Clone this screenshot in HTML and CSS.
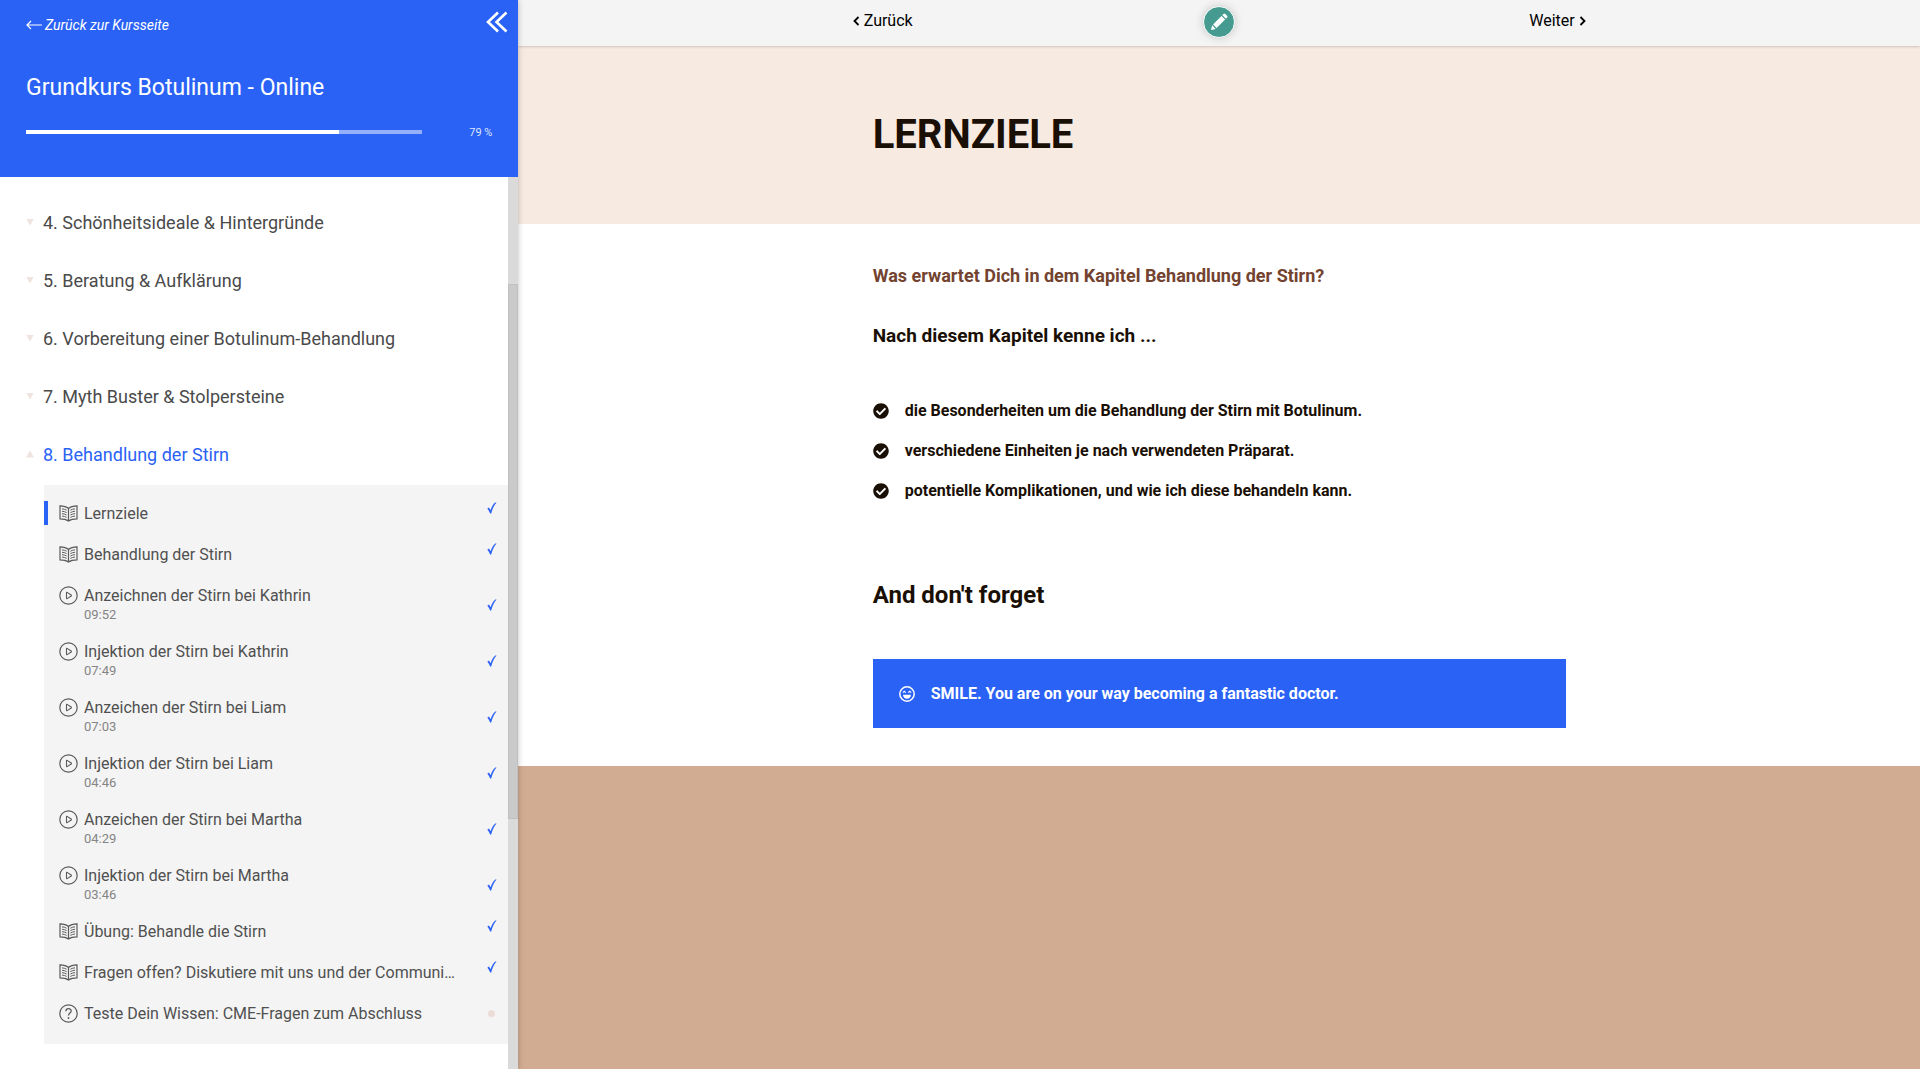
FILE: index.html
```html
<!DOCTYPE html>
<html lang="de">
<head>
    <meta charset="UTF-8">
    <meta name="viewport" content="width=device-width, initial-scale=1.0">
    <title>Grundkurs Botulinum - Online</title>
    <link rel="stylesheet" href="styles.css">
</head>
<body>
    <!-- Shared icons -->
    <svg class="sprite" aria-hidden="true">
        <symbol id="icon-book" viewBox="0 0 19 18">
            <path d="M9.5 4C7.500 2.300 4.500 1.500 1 1.400V14.300C4.500 14.300 7.500 15 9.500 16.500C11.500 15 14.500 14.300 18 14.300V1.400C14.500 1.500 11.500 2.300 9.500 4ZM9.500 4V16.500" fill="none" stroke="currentColor" stroke-width="1.200"/>
            <path d="M3 4.300C4.800 4.500 6.300 5 7.600 5.700M3 6.700C4.800 6.900 6.300 7.400 7.600 8.100M3 9.100C4.800 9.300 6.300 9.800 7.600 10.500M3 11.500C4.800 11.700 6.300 12.200 7.600 12.900M16 4.300C14.200 4.500 12.700 5 11.400 5.700M16 6.700C14.200 6.900 12.700 7.400 11.400 8.100M16 9.100C14.200 9.300 12.700 9.800 11.400 10.500M16 11.500C14.200 11.700 12.700 12.200 11.400 12.900" fill="none" stroke="currentColor" stroke-width="1"/>
        </symbol>
        <symbol id="icon-play" viewBox="0 0 19 19">
            <circle cx="9.500" cy="9.500" r="8.700" fill="none" stroke="currentColor" stroke-width="1.200"/>
            <path d="M7.500 6.700V12.300Q7.500 12.900 8.100 12.600L12.200 10Q12.700 9.500 12.200 9L8.100 6.400Q7.500 6.100 7.500 6.700Z" fill="none" stroke="currentColor" stroke-width="1.100"/>
        </symbol>
        <symbol id="icon-question" viewBox="0 0 19 19">
            <circle cx="9.500" cy="9.500" r="8.700" fill="none" stroke="currentColor" stroke-width="1.200"/>
            <path d="M6.900 7.200C6.900 3.700 12.200 3.800 12.200 7C12.200 9.200 9.500 9 9.500 11.600" fill="none" stroke="currentColor" stroke-width="1.300"/>
            <circle cx="9.500" cy="14" r="0.900" fill="currentColor"/>
        </symbol>
        <symbol id="icon-check" viewBox="0 0 10 12">
            <path d="M0.300 6.800L1.900 5.600C2.600 6.400 3.100 7.200 3.500 8.200C4.800 4.700 6.500 1.500 8.300 0.500H9.600C7.300 2.900 5.300 6.900 4.200 11.500H3.100C2.500 9.700 1.600 8 0.300 6.800Z" fill="currentColor"/>
        </symbol>
        <symbol id="icon-check-circle" viewBox="0 0 512 512">
            <path d="M504 256c0 137-111 248-248 248S8 393 8 256 119 8 256 8s248 111 248 248zM227.300 387.300l184-184c6.200-6.200 6.200-16.400 0-22.600l-22.600-22.600c-6.200-6.200-16.400-6.200-22.600 0L216 308.100l-70.100-70.100c-6.200-6.200-16.400-6.200-22.600 0l-22.600 22.600c-6.200 6.200-6.200 16.400 0 22.600l104 104c6.200 6.200 16.400 6.200 22.600 0z" fill="currentColor"/>
        </symbol>
    </svg>

    <aside class="sidebar">
        <header class="course-header">
            <div class="course-top">
                <a class="back-link" href="#">
                    <svg width="16" height="10" viewBox="0 0 16 10" aria-hidden="true"><path d="M5 1L1 5L5 9M1 5H16" fill="none" stroke="currentColor" stroke-width="1.200"/></svg>
                    Zurück zur Kursseite
                </a>
                <button class="collapse-btn" type="button" aria-label="Menü einklappen">
                    <svg width="22" height="22" viewBox="0 0 22 22"><path d="M12 1.500L2 11L12 20.500M20.500 1.500L10.500 11L20.500 20.500" fill="none" stroke="currentColor" stroke-width="2.600"/></svg>
                </button>
            </div>
            <h2 class="course-title">Grundkurs Botulinum - Online</h2>
            <div class="progress">
                <div class="progress-track"><div class="progress-fill" style="width: 79%"></div></div>
                <span class="progress-label">79 %</span>
            </div>
        </header>

        <div class="sidebar-body">
            <nav class="chapters">
                <button class="chapter" type="button">4. Schönheitsideale &amp; Hintergründe</button>
                <button class="chapter" type="button">5. Beratung &amp; Aufklärung</button>
                <button class="chapter" type="button">6. Vorbereitung einer Botulinum-Behandlung</button>
                <button class="chapter" type="button">7. Myth Buster &amp; Stolpersteine</button>
                <button class="chapter open" type="button">8. Behandlung der Stirn</button>
                <ul class="lessons">
                    <li class="lesson active">
                        <div class="lesson-info"><a href="#"><svg class="icon"><use href="#icon-book"/></svg>Lernziele</a></div>
                        <svg class="check"><use href="#icon-check"/></svg>
                    </li>
                    <li class="lesson">
                        <div class="lesson-info"><a href="#"><svg class="icon"><use href="#icon-book"/></svg>Behandlung der Stirn</a></div>
                        <svg class="check"><use href="#icon-check"/></svg>
                    </li>
                    <li class="lesson">
                        <div class="lesson-info"><a href="#"><svg class="icon"><use href="#icon-play"/></svg>Anzeichnen der Stirn bei Kathrin</a><span class="time">09:52</span></div>
                        <svg class="check"><use href="#icon-check"/></svg>
                    </li>
                    <li class="lesson">
                        <div class="lesson-info"><a href="#"><svg class="icon"><use href="#icon-play"/></svg>Injektion der Stirn bei Kathrin</a><span class="time">07:49</span></div>
                        <svg class="check"><use href="#icon-check"/></svg>
                    </li>
                    <li class="lesson">
                        <div class="lesson-info"><a href="#"><svg class="icon"><use href="#icon-play"/></svg>Anzeichen der Stirn bei Liam</a><span class="time">07:03</span></div>
                        <svg class="check"><use href="#icon-check"/></svg>
                    </li>
                    <li class="lesson">
                        <div class="lesson-info"><a href="#"><svg class="icon"><use href="#icon-play"/></svg>Injektion der Stirn bei Liam</a><span class="time">04:46</span></div>
                        <svg class="check"><use href="#icon-check"/></svg>
                    </li>
                    <li class="lesson">
                        <div class="lesson-info"><a href="#"><svg class="icon"><use href="#icon-play"/></svg>Anzeichen der Stirn bei Martha</a><span class="time">04:29</span></div>
                        <svg class="check"><use href="#icon-check"/></svg>
                    </li>
                    <li class="lesson">
                        <div class="lesson-info"><a href="#"><svg class="icon"><use href="#icon-play"/></svg>Injektion der Stirn bei Martha</a><span class="time">03:46</span></div>
                        <svg class="check"><use href="#icon-check"/></svg>
                    </li>
                    <li class="lesson">
                        <div class="lesson-info"><a href="#"><svg class="icon"><use href="#icon-book"/></svg>Übung: Behandle die Stirn</a></div>
                        <svg class="check"><use href="#icon-check"/></svg>
                    </li>
                    <li class="lesson">
                        <div class="lesson-info"><a href="#"><svg class="icon"><use href="#icon-book"/></svg>Fragen offen? Diskutiere mit uns und der Communi…</a></div>
                        <svg class="check"><use href="#icon-check"/></svg>
                    </li>
                    <li class="lesson">
                        <div class="lesson-info"><a href="#"><svg class="icon"><use href="#icon-question"/></svg>Teste Dein Wissen: CME-Fragen zum Abschluss</a></div>
                        <span class="dot"></span>
                    </li>
                </ul>
            </nav>
            <div class="scrollbar"><div class="scrollbar-thumb"></div></div>
        </div>
    </aside>

    <main class="content">
        <nav class="lesson-nav">
            <div class="lesson-nav-inner">
                <a href="#">
                    <svg width="7" height="10" viewBox="0 0 7 10" aria-hidden="true"><path d="M5.500 1L1.500 5L5.500 9" fill="none" stroke="currentColor" stroke-width="1.800"/></svg>
                    Zurück
                </a>
                <button class="edit-btn" type="button" aria-label="Notiz schreiben">
                    <svg width="20" height="20" viewBox="0 0 20 20"><path d="M2 18L3.100 13.300L6.700 16.900ZM4 12.400L12.500 3.900L16.100 7.500L7.600 16ZM13.300 3.100L14.500 1.900Q15.400 1 16.300 1.900L18.100 3.700Q19 4.600 18.100 5.500L16.900 6.700Z" fill="currentColor"/></svg>
                </button>
                <a class="next" href="#">
                    Weiter
                    <svg width="7" height="10" viewBox="0 0 7 10" aria-hidden="true"><path d="M1.500 1L5.500 5L1.500 9" fill="none" stroke="currentColor" stroke-width="1.800"/></svg>
                </a>
            </div>
        </nav>

        <section class="hero">
            <h1 class="wrap">LERNZIELE</h1>
        </section>

        <section class="lesson-body wrap">
            <h3 class="question">Was erwartet Dich in dem Kapitel Behandlung der Stirn?</h3>
            <h3 class="intro">Nach diesem Kapitel kenne ich ...</h3>
            <ul class="goals">
                <li><svg><use href="#icon-check-circle"/></svg>die Besonderheiten um die Behandlung der Stirn mit Botulinum.</li>
                <li><svg><use href="#icon-check-circle"/></svg>verschiedene Einheiten je nach verwendeten Präparat.</li>
                <li><svg><use href="#icon-check-circle"/></svg>potentielle Komplikationen, und wie ich diese behandeln kann.</li>
            </ul>
            <h2 class="reminder">And don't forget</h2>
            <div class="notice">
                <svg width="16" height="16" viewBox="0 0 16 16" aria-hidden="true">
                    <circle cx="8" cy="8" r="7.200" fill="none" stroke="currentColor" stroke-width="1.500"/>
                    <path d="M3.800 6.600L5.300 5.300L6.800 6.600M9.200 6.600L10.700 5.300L12.200 6.600" fill="none" stroke="currentColor" stroke-width="1.100"/>
                    <path d="M4 8.700H12C11.800 11.200 10.200 12.700 8 12.700S4.200 11.200 4 8.700Z" fill="currentColor"/>
                </svg>
                SMILE. You are on your way becoming a fantastic doctor.
            </div>
        </section>

        <footer class="page-footer"></footer>
    </main>
</body>
</html>
```

FILE: styles.css
```css
* {
    box-sizing: border-box;
}

body {
    margin: 0;
    display: flex;
    min-height: 100vh;
    font-family: Roboto, "Liberation Sans", sans-serif;
    font-size: 16px;
    color: #1a0f05;
    background-color: #fff;
}

h1, h2, h3, ul {
    margin: 0;
    padding: 0;
}

ul {
    list-style: none;
}

a {
    color: inherit;
    text-decoration: none;
}

button {
    border: 0;
    padding: 0;
    background: none;
    font: inherit;
    color: inherit;
    cursor: pointer;
}

.sprite {
    position: absolute;
    width: 0;
    height: 0;
}

/* Sidebar */
.sidebar {
    position: sticky;
    top: 0;
    z-index: 2;
    flex: 0 0 27%;
    display: flex;
    flex-direction: column;
    height: 100vh;
    overflow: hidden;
    background-color: #fff;
    box-shadow: 0 0 6px rgba(0, 0, 0, 0.25);
}

.course-header {
    padding: 11px 26px 38px;
    background-color: #2a62f6;
    color: #fff;
}

.course-top {
    display: flex;
    justify-content: space-between;
    margin-right: -16px;
}

.back-link {
    display: flex;
    align-items: center;
    gap: 3px;
    height: 28px;
    font-size: 14px;
    font-style: italic;
}

.collapse-btn {
    display: flex;
    height: 22px;
}

.course-title {
    margin-top: 33px;
    font-size: 23px;
    font-weight: 400;
    line-height: 32px;
}

.progress {
    display: flex;
    align-items: center;
    justify-content: space-between;
    margin-top: 21px;
}

.progress-track {
    width: 85%;
    height: 4px;
    background-color: #94b0fa;
}

.progress-fill {
    height: 100%;
    background-color: #fff;
}

.progress-label {
    padding-top: 2px;
    font-size: 11px;
    line-height: 12px;
    color: #dde6fd;
}

.sidebar-body {
    flex: 1;
    display: flex;
    min-height: 0;
}

.chapters {
    flex: 1;
    min-width: 0;
    padding-top: 16px;
    overflow: hidden;
}

.chapter {
    display: flex;
    align-items: center;
    gap: 9px;
    width: 100%;
    height: 58px;
    padding-left: 26px;
    font-size: 18px;
    text-align: left;
    color: #4a4a4a;
}

/* Small triangle in front of each chapter */
.chapter::before {
    content: "";
    width: 8px;
    height: 7px;
    background-color: #f0e4e0;
    clip-path: polygon(0 0, 100% 0, 50% 100%);
}

.chapter.open {
    color: #2a62f6;
}

.chapter.open::before {
    clip-path: polygon(0 100%, 100% 100%, 50% 0);
}

.lessons {
    margin: 2px 0 0 44px;
    padding: 8px 0 10px;
    background-color: #f4f4f4;
    color: #505050;
}

.lesson {
    display: flex;
    justify-content: space-between;
    padding: 8px 11px 9px 0;
}

.lesson-info a {
    display: flex;
    align-items: center;
    gap: 6px;
    height: 24px;
    padding-left: 11px;
    border-left: 4px solid transparent;
    white-space: nowrap;
}

.lesson.active a {
    border-left-color: #2a62f6;
}

.icon {
    width: 19px;
    height: 19px;
    color: #5a5a5a;
}

.time {
    display: block;
    padding-left: 40px;
    font-size: 13px;
    line-height: 15px;
    color: #858585;
}

.check {
    align-self: flex-end;
    width: 10px;
    height: 12px;
    margin-bottom: 11px;
    color: #2a62f6;
}

.dot {
    align-self: center;
    width: 7px;
    height: 7px;
    margin-right: 2px;
    border-radius: 50%;
    background-color: #ecdcd7;
}

.scrollbar {
    width: 10px;
    background-color: #dadada;
}

.scrollbar-thumb {
    height: 60%;
    background-color: #cacaca;
    border: 1px solid #c0c0c0;
    /* current scroll position */
    position: relative;
    top: 12%;
}

/* Content */
.content {
    flex: 1;
    display: flex;
    flex-direction: column;
    min-width: 0;
}

.wrap {
    width: 100%;
    max-width: 693px;
    margin: 0 auto;
}

.lesson-nav {
    position: relative;
    z-index: 1;
    height: 46px;
    background-color: #f4f4f4;
    box-shadow: 0 0 3px rgba(0, 0, 0, 0.3);
}

.lesson-nav-inner {
    display: flex;
    max-width: 733px;
    height: 41px;
    margin: 0 auto;
    color: #000;
}

.lesson-nav a {
    flex: 1;
    display: flex;
    align-items: center;
    gap: 4px;
}

.lesson-nav .next {
    justify-content: flex-end;
}

.edit-btn {
    display: flex;
    align-items: center;
    justify-content: center;
    width: 32px;
    height: 32px;
    margin-top: 6px;
    border: 1px solid #fff;
    border-radius: 50%;
    background-color: #459b90;
    color: #fff;
    box-shadow: 0 0 10px rgba(0, 0, 0, 0.18);
}

.hero {
    display: flex;
    align-items: center;
    height: 178px;
    background-color: #f7eae1;
}

.hero h1 {
    font-size: 40px;
    line-height: 48px;
}

.lesson-body {
    padding: 40px 0 38px;
}

.question {
    font-size: 18px;
    line-height: 24px;
    color: #734330;
}

.intro {
    margin-top: 36px;
    font-size: 19px;
    line-height: 24px;
}

.goals {
    display: flex;
    flex-direction: column;
    gap: 16px;
    margin-top: 51px;
    font-weight: 700;
    line-height: 24px;
}

.goals li {
    display: flex;
    align-items: center;
    gap: 16px;
}

.goals svg {
    width: 16px;
    height: 16px;
}

.reminder {
    margin-top: 76px;
    font-size: 24px;
    line-height: 32px;
}

.notice {
    display: flex;
    align-items: center;
    gap: 16px;
    margin-top: 48px;
    padding: 22px 26px;
    background-color: #2a62f6;
    color: #fff;
    font-weight: 700;
    line-height: 25px;
}

.page-footer {
    flex: 1;
    background-color: #d1ac92;
}
```
